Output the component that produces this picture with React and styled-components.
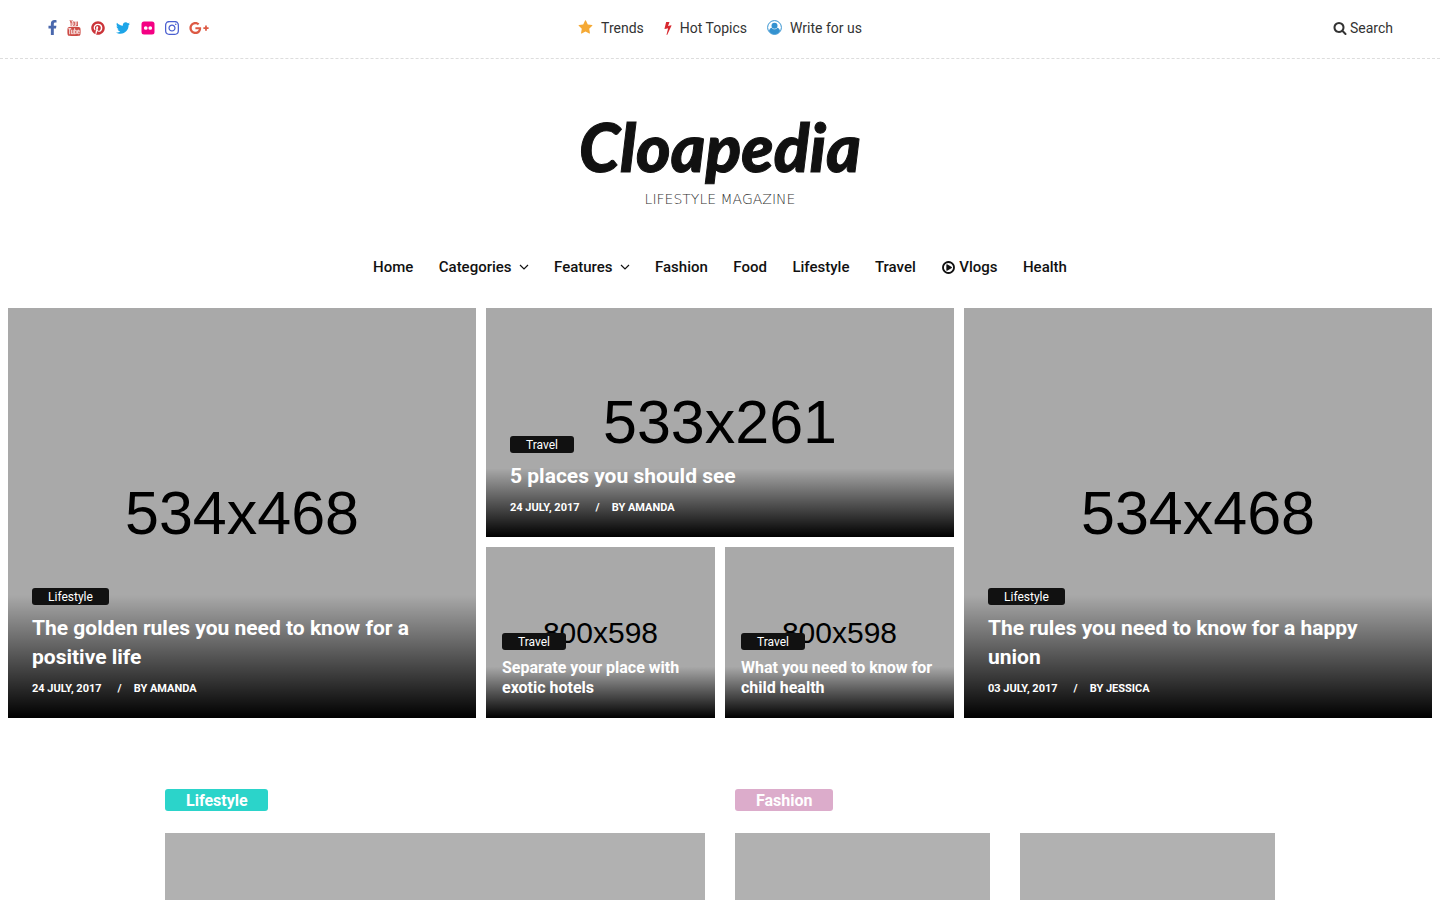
import React from 'react';

import styled, { createGlobalStyle } from 'styled-components';

import {
    FaFacebookF,
    FaGooglePlusG,
    FaInstagram,
    FaPinterest,
    FaTwitter
} from 'react-icons/fa';
import { TfiYoutube } from 'react-icons/tfi';

const GlobalStyle = createGlobalStyle`
    * {
        box-sizing: border-box;
    }

    body {
        margin: 0;
        background: #fff;
        color: #111;
        font-family: Roboto, sans-serif;
        font-size: 14px;
    }

    a {
        color: inherit;
        text-decoration: none;
    }
`;

const TopBar = styled.div`
    display: grid;
    grid-template-columns: 1fr auto 1fr;
    align-items: center;
    height: 59px;
    padding: 0 47px 3px;
    border-bottom: 1px dashed #ddd;
`;

const SocialList = styled.div`
    display: flex;
    align-items: center;
    gap: 10px;
`;

const SocialLink = styled.a`
    display: flex;
    justify-content: center;
    width: ${({ $width }) => $width}px;
    color: ${({ $color }) => $color};

    svg {
        flex: none;
        width: ${({ $width, $iconWidth }) => $iconWidth || $width}px;
        height: auto;
    }
`;

const TopLinks = styled.div`
    display: flex;
    align-items: center;
    gap: 20px;
`;

const TopLink = styled.a`
    display: flex;
    align-items: center;
    gap: 8px;
    color: #333;
    line-height: 20px;

    svg {
        color: ${({ $color }) => $color};
    }
`;

const SearchButton = styled.button`
    display: flex;
    align-items: center;
    justify-self: end;
    gap: 3px;
    padding: 0;
    border: none;
    background: none;
    color: #333;
    font: inherit;
    line-height: 20px;
    cursor: pointer;
`;

const Brand = styled.header`
    display: flex;
    flex-direction: column;
    align-items: center;
    padding: 46px 0 48px;
`;

const BrandName = styled.h1`
    margin: 0;
    color: #111;
    font-family: Lato, sans-serif;
    font-size: 66px;
    font-style: italic;
    font-weight: 900;
    line-height: 84px;
    -webkit-text-stroke: 1px #111;
`;

const BrandTagline = styled.p`
    margin: 0;
    color: #333;
    font-family: "DejaVu Sans", sans-serif;
    font-size: 14px;
    font-weight: 200;
    line-height: 20px;
`;

const Nav = styled.nav`
    display: flex;
    justify-content: space-between;
    max-width: 694px;
    margin: 0 auto;
    padding-bottom: 31px;
`;

const NavLink = styled.a`
    display: flex;
    align-items: center;
    gap: ${({ $gap }) => $gap}px;
    font-size: 15px;
    font-weight: 500;
    line-height: 20px;
`;

const Hero = styled.section`
    display: grid;
    grid-template-columns: repeat(3, 1fr);
    gap: 10px;
    padding: 0 8px;
`;

const HeroMiddle = styled.div`
    display: grid;
    grid-template-columns: 1fr 1fr;
    grid-template-rows: 229fr 171fr;
    gap: 10px;

    > :first-child {
        grid-column: 1 / -1;
    }
`;

const Tile = styled.article`
    display: grid;
    min-width: 0;
    aspect-ratio: ${({ $tall }) => $tall ? '468 / 410' : 'auto'};
    background: #a9a9a9;

    > * {
        grid-area: 1 / 1;
    }
`;

const TileSize = styled.div`
    place-self: center;
    color: #000;
    font-family: "Liberation Sans", Arial, sans-serif;
    font-size: ${({ $small }) => $small ? 30 : 61}px;
    line-height: 1;
`;

const TileBody = styled.div`
    display: flex;
    flex-direction: column;
    align-items: flex-start;
    justify-content: flex-end;
    padding: ${({ $small }) => $small ? '0 16px 20px' : '0 24px 21px'};
    background: linear-gradient(to top, #000 0%, transparent 30%);
    color: #fff;
`;

const TileTag = styled.a`
    padding: 1px 16px 0;
    border-radius: 3px;
    background: #111;
    font-size: 12px;
    line-height: 16px;
`;

const TileTitle = styled.h2`
    margin: ${({ $small }) => $small ? '8px 0 0' : '9px 0'};
    font-size: ${({ $small }) => $small ? 16 : 21}px;
    font-weight: 700;
    line-height: ${({ $small }) => $small ? 20 : 29}px;
`;

const TileMeta = styled.div`
    display: flex;
    font-size: 11px;
    font-weight: 700;
    line-height: 16px;
    text-transform: uppercase;
`;

const MetaDivider = styled.span`
    padding: 0 12px 0 16px;
`;

const Sections = styled.main`
    display: grid;
    grid-template-columns: 1fr 1fr;
    gap: 30px;
    max-width: 1140px;
    margin: 0 auto;
    padding: 71px 15px 60px;
`;

const SectionTitle = styled.h2`
    width: fit-content;
    margin: 0 0 22px;
    padding: 1px 20px 0 21px;
    border-radius: 3px;
    background: ${({ $color }) => $color};
    color: #fff;
    font-size: 16px;
    font-weight: 700;
    line-height: 21px;
`;

const CardGrid = styled.div`
    display: grid;
    grid-template-columns: repeat(${({ $columns }) => $columns}, 1fr);
    gap: 30px;
`;

const CardImage = styled.div`
    aspect-ratio: 4 / 3;
    background: #b1b1b1;
`;

const SolidIcon = ({ path, width = 14, height = width, viewBox = '0 0 1792 1792' }) => (
    <svg width={width} height={height} viewBox={viewBox} fill="currentColor" aria-hidden="true">
        <path d={path} />
    </svg>
);

const ICONS = {
    star: 'M1728 647q0 22-26 48l-363 354 86 500q1 7 1 20 0 21-10.5 35.5t-30.5 14.5q-19 0-40-12l-449-236-449 236q-22 12-40 12-21 0-31.5-14.5t-10.5-35.5q0-6 2-20l86-500-364-354q-25-27-25-48 0-37 56-46l502-73 225-455q19-41 49-41t49 41l225 455 502 73q56 9 56 46z',
    bolt: 'M1333 566q18 20 7 44l-540 1157q-13 25-42 25-4 0-14-2-17-5-25.5-19t-4.5-30l197-808-406 101q-4 1-12 1-18 0-31-11-18-15-13-39l201-825q4-16 18-26t32-10h328q19 0 32 12.5t13 29.5q0 8-5 18l-171 463 396-98q8-2 12-2 19 0 34 15z',
    search: 'M1216 832q0-185-131.5-316.5t-316.5-131.5-316.5 131.5-131.5 316.5 131.5 316.5 316.5 131.5 316.5-131.5 131.5-316.5zm512 832q0 52-38 90t-90 38q-54 0-90-38l-343-342q-179 124-399 124-143 0-273.5-55.5t-225-150-150-225-55.5-273.5 55.5-273.5 150-225 225-150 273.5-55.5 273.5 55.5 225 150 150 225 55.5 273.5q0 220-124 399l343 343q37 37 37 90z',
    play: 'M1312 896q0 37-32 55l-544 320q-15 9-32 9-16 0-32-8-32-19-32-56v-640q0-37 32-56 33-18 64 1l544 320q32 18 32 55zm128 0q0-148-73-273t-198-198-273-73-273 73-198 198-73 273 73 273 198 198 273 73 273-73 198-198 73-273zm224 0q0 209-103 385.5t-279.5 279.5-385.5 103-385.5-103-279.5-279.5-103-385.5 103-385.5 279.5-279.5 385.5-103 385.5 103 279.5 279.5 103 385.5z'
};

const UserIcon = () => (
    <svg width="15" height="15" viewBox="0 0 30 30" aria-hidden="true">
        <circle cx="15" cy="15" r="13.8" fill="none" stroke="currentColor" strokeWidth="2" />
        <circle cx="15" cy="11.5" r="6" fill="currentColor" />
        <path d="M4 22C4.500 18.500 7 15.800 9.500 15.500C12.500 19.500 17.500 19.500 20.500 15.500C23 15.800 25.500 18.500 26 22C21 30.500 9 30.500 4 22Z" fill="currentColor" />
    </svg>
);

const FlickrIcon = () => (
    <svg viewBox="0 0 28 28" aria-hidden="true">
        <rect x="1" y="1" width="26" height="26" rx="5" fill="currentColor" />
        <circle cx="9.500" cy="14" r="3.700" fill="#fff" />
        <circle cx="18.500" cy="14" r="3.700" fill="#fff" />
    </svg>
);

const ChevronIcon = () => (
    <svg width="10" height="6" viewBox="0 0 10 6" fill="none" stroke="currentColor" strokeWidth="1.200" aria-hidden="true">
        <path d="M1 1L5 5L9 1" />
    </svg>
);

const SOCIALS = [
    { name: 'Facebook', Icon: FaFacebookF, color: '#4a68ad', width: 10, iconWidth: 15 },
    { name: 'YouTube', Icon: TfiYoutube, color: '#cd4b45', width: 14, iconWidth: 16 },
    { name: 'Pinterest', Icon: FaPinterest, color: '#cb3439', width: 14 },
    { name: 'Twitter', Icon: FaTwitter, color: '#1da5e8', width: 16, iconWidth: 14 },
    { name: 'Flickr', Icon: FlickrIcon, color: '#f40083', width: 14 },
    { name: 'Instagram', Icon: FaInstagram, color: '#4a5fd0', width: 14, iconWidth: 16 },
    { name: 'Google Plus', Icon: FaGooglePlusG, color: '#dd5a44', width: 20 }
];

const NAV_ITEMS = [
    { label: 'Home' },
    { label: 'Categories', menu: true },
    { label: 'Features', menu: true },
    { label: 'Fashion' },
    { label: 'Food' },
    { label: 'Lifestyle' },
    { label: 'Travel' },
    { label: 'Vlogs', video: true },
    { label: 'Health' }
];

const HeroTile = ({ size, tag, title, date, author, tall, small }) => (
    <Tile $tall={tall}>
        <TileSize $small={small}>{size}</TileSize>
        <TileBody $small={small}>
            <TileTag href="#">{tag}</TileTag>
            <TileTitle $small={small}><a href="#">{title}</a></TileTitle>
            {date && (
                <TileMeta>
                    <span>{date}</span>
                    <MetaDivider>/</MetaDivider>
                    <a href="#">By {author}</a>
                </TileMeta>
            )}
        </TileBody>
    </Tile>
);

const App = () => {
    return (
        <>
            <GlobalStyle />
            <TopBar>
                <SocialList>
                    {SOCIALS.map(({ name, Icon, color, width, iconWidth }) => (
                        <SocialLink key={name} href="#" aria-label={name} $color={color} $width={width} $iconWidth={iconWidth}>
                            <Icon />
                        </SocialLink>
                    ))}
                </SocialList>
                <TopLinks>
                    <TopLink href="#" $color="#f5a934"><SolidIcon path={ICONS.star} width={15} />Trends</TopLink>
                    <TopLink href="#" $color="#d8282f">
                        <SolidIcon path={ICONS.bolt} width={8} height={14} viewBox="448 0 896 1792" />
                        Hot Topics
                    </TopLink>
                    <TopLink href="#" $color="#3492d0"><UserIcon />Write for us</TopLink>
                </TopLinks>
                <SearchButton type="button"><SolidIcon path={ICONS.search} />Search</SearchButton>
            </TopBar>

            <Brand>
                <BrandName>Cloapedia</BrandName>
                <BrandTagline>LIFESTYLE MAGAZINE</BrandTagline>
            </Brand>

            <Nav>
                {NAV_ITEMS.map(({ label, menu, video }) => (
                    <NavLink key={label} href="#" $gap={menu ? 7 : 3}>
                        {video && <SolidIcon path={ICONS.play} width={15} />}
                        {label}
                        {menu && <ChevronIcon />}
                    </NavLink>
                ))}
            </Nav>

            <Hero>
                <HeroTile
                    tall
                    size="534x468"
                    tag="Lifestyle"
                    title="The golden rules you need to know for a positive life"
                    date="24 July, 2017"
                    author="Amanda"
                />
                <HeroMiddle>
                    <HeroTile
                        size="533x261"
                        tag="Travel"
                        title="5 places you should see"
                        date="24 July, 2017"
                        author="Amanda"
                    />
                    <HeroTile small size="800x598" tag="Travel" title="Separate your place with exotic hotels" />
                    <HeroTile small size="800x598" tag="Travel" title="What you need to know for child health" />
                </HeroMiddle>
                <HeroTile
                    tall
                    size="534x468"
                    tag="Lifestyle"
                    title="The rules you need to know for a happy union"
                    date="03 July, 2017"
                    author="Jessica"
                />
            </Hero>

            <Sections>
                <section>
                    <SectionTitle $color="#2bd4ca">Lifestyle</SectionTitle>
                    <CardGrid $columns={1}>
                        <CardImage />
                    </CardGrid>
                </section>
                <section>
                    <SectionTitle $color="#dcaccb">Fashion</SectionTitle>
                    <CardGrid $columns={2}>
                        <CardImage />
                        <CardImage />
                    </CardGrid>
                </section>
            </Sections>
        </>
    );
};

export default App;
